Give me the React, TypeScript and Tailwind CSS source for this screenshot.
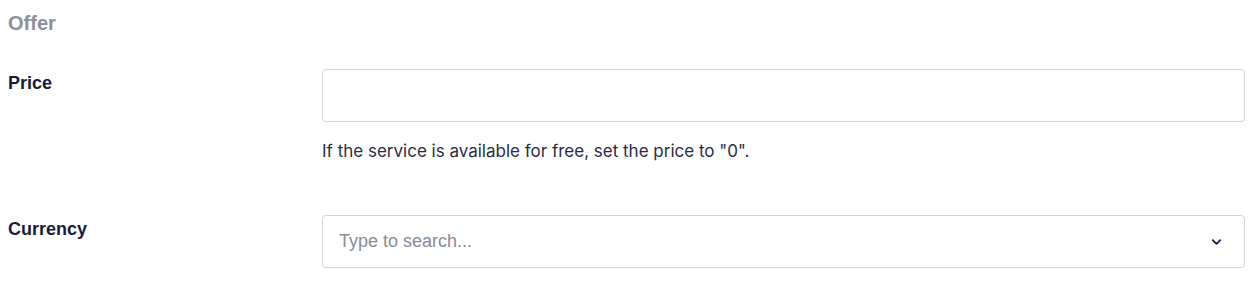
import { ChevronDown } from 'lucide-react';

export default function App() {
  return (
    <div className="bg-white pl-2 pr-[13px] pt-[11px] font-['Liberation_Sans',Arial,sans-serif]">
      <h2 className="text-[20px] font-bold leading-[24px] text-[#8e8f9b]">Offer</h2>

      <div className="mt-[34px] flex">
        <label className="w-[314px] shrink-0 pt-[3px] text-[18px] font-bold leading-[22px] text-[#1a1b3a]">
          Price
        </label>
        <div className="flex-1">
          <input
            type="text"
            className="block h-[53px] w-full rounded-[4px] border border-[#d4d4d8] bg-white px-4 text-[18px] outline-none"
          />
          <p className="mt-[19px] font-['Inter',sans-serif] text-[17px] leading-[20px] text-[#2a2b45]">
            If the service is available for free, set the price to "0".
          </p>
        </div>
      </div>

      <div className="mt-[54px] flex">
        <label className="w-[314px] shrink-0 pt-[3px] text-[18px] font-bold leading-[22px] text-[#1a1b3a]">
          Currency
        </label>
        <div className="relative flex-1">
          <input
            type="text"
            placeholder="Type to search..."
            className="block h-[53px] w-full rounded-[4px] border border-[#d4d4d8] bg-white pl-4 pr-10 text-[18px] text-[#2a2b45] outline-none placeholder:text-[#8a8b97]"
          />
          <ChevronDown
            className="pointer-events-none absolute right-[21px] top-1/2 h-[15px] w-[15px] -translate-y-1/2 text-[#1c1d3b]"
            strokeWidth={3}
          />
        </div>
      </div>
    </div>
  );
}
